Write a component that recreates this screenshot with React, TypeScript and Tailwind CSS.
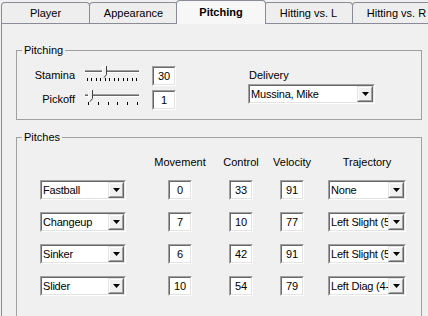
import type { ReactNode } from 'react'

const tabs = ['Player', 'Appearance', 'Pitching', 'Hitting vs. L', 'Hitting vs. R']

const pitches = [
  { name: 'Fastball', movement: 0, control: 33, velocity: 91, trajectory: 'None' },
  { name: 'Changeup', movement: 7, control: 10, velocity: 77, trajectory: 'Left Slight (5-6)' },
  { name: 'Sinker', movement: 6, control: 42, velocity: 91, trajectory: 'Left Slight (5-6)' },
  { name: 'Slider', movement: 10, control: 54, velocity: 79, trajectory: 'Left Diag (4-5)' },
]

function Sunken({ className, children }: { className: string; children: ReactNode }) {
  return (
    <div className={`border border-t-[#a0a0a0] border-l-[#a0a0a0] border-r-white border-b-white ${className}`}>
      <div className="flex h-full border border-t-[#696969] border-l-[#696969] border-r-[#e3e3e3] border-b-[#e3e3e3] bg-white">
        {children}
      </div>
    </div>
  )
}

function NumBox({ value }: { value: number }) {
  return (
    <Sunken className="h-[20px] w-[24px]">
      <span className="flex-1 text-center leading-[16px]">{value}</span>
    </Sunken>
  )
}

function DropButton() {
  return (
    <div className="h-full w-[16px] shrink-0 border border-t-[#e3e3e3] border-l-[#e3e3e3] border-r-[#696969] border-b-[#696969]">
      <div className="flex h-full items-center justify-center border border-t-white border-l-white border-r-[#a0a0a0] border-b-[#a0a0a0] bg-[#f0f0f0]">
        <svg width="7" height="4" viewBox="0 0 7 4">
          <path d="M0 0h7L3.5 4z" fill="#000" />
        </svg>
      </div>
    </div>
  )
}

function Combo({ value, className }: { value: string; className: string }) {
  return (
    <Sunken className={`h-[20px] ${className}`}>
      <span className="min-w-0 flex-1 overflow-hidden whitespace-nowrap pl-px tracking-[-0.2px] leading-[16px]">{value}</span>
      <DropButton />
    </Sunken>
  )
}

// trackbar drawn as a tiny picture: groove, ticks and the pointed thumb
function Slider({ thumb, ticks }: { thumb: number; ticks: number[] }) {
  return (
    <svg width="57" height="20" viewBox="0 0 57 20" className="shrink-0">
      <rect x="1" y="4" width="54" height="1" fill="#a0a0a0" />
      <rect x="1" y="5" width="54" height="1" fill="#696969" />
      <rect x="1" y="6" width="54" height="1" fill="#ffffff" />
      {ticks.map((t) => (
        <rect key={t} x={Math.round(t)} y="12" width="1" height="3" fill="#000" />
      ))}
      <path d={`M${thumb - 2} 0h4v8l-2 3l-2 -3z`} fill="#f0f0f0" />
      <path d={`M${thumb - 1.5} 8.5V0.5h3.5`} fill="none" stroke="#fff" strokeWidth="1" />
      <path d={`M${thumb + 2.5} 0v8.5l-2.5 3.2`} fill="none" stroke="#404040" strokeWidth="1" />
    </svg>
  )
}

const staminaTicks = Array.from({ length: 12 }, (_, i) => 3 + i * 4.45)
const pickoffTicks = Array.from({ length: 6 }, (_, i) => 4 + i * 9.8)

export default function App() {
  return (
    <div className="h-[316px] w-[428px] overflow-hidden bg-[#f0f0f0] font-['Liberation_Sans',Arial,sans-serif] text-[11px] text-black">
      <div className="flex h-[23px] items-end pl-px">
        {tabs.map((t) =>
          t === 'Pitching' ? (
            <div
              key={t}
              className="relative z-10 -mb-px -ml-[2px] -mr-px flex h-[24px] w-[90px] shrink-0 justify-center rounded-t-[4px] border border-b-0 border-[#898c95] bg-[#f7f7f7] pt-[4px] font-bold leading-[14px]"
            >
              {t}
            </div>
          ) : (
            <div
              key={t}
              className="-ml-px flex h-[21px] w-[89px] shrink-0 justify-center rounded-t-[4px] border border-b-0 border-[#898c95] bg-[#eeeeee] pt-[3px] leading-[14px] first:ml-0"
            >
              {t}
            </div>
          )
        )}
      </div>

      <div className="ml-px h-[300px] w-[440px] border border-[#898c95] bg-[#f0f0f0] px-[14px] pt-[19px]">
        <fieldset className="h-[77px] w-[406px] border border-[#a0a0a0]">
          <legend className="ml-[5px] px-[2px] leading-[14px]">Pitching</legend>
          <div className="flex pt-[9px]">
            <div className="flex flex-col gap-[4px]">
              <div className="flex h-[20px] items-start">
                <span className="w-[58px] text-right leading-[18px]">Stamina</span>
                <div className="ml-[9px]">
                  <Slider thumb={20} ticks={staminaTicks} />
                </div>
                <div className="ml-[11px]">
                  <NumBox value={30} />
                </div>
              </div>
              <div className="flex h-[20px] items-start">
                <span className="w-[58px] text-right leading-[18px]">Pickoff</span>
                <div className="ml-[9px]">
                  <Slider thumb={6} ticks={pickoffTicks} />
                </div>
                <div className="ml-[11px]">
                  <NumBox value={1} />
                </div>
              </div>
            </div>
            <div className="ml-[72px] flex flex-col pt-[2px]">
              <span className="pl-px leading-[14px]">Delivery</span>
              <Combo value="Mussina, Mike" className="mt-[2px] w-[127px]" />
            </div>
          </div>
        </fieldset>

        <fieldset className="mt-[10px] h-[200px] w-[406px] border border-[#a0a0a0]">
          <legend className="ml-[5px] px-[2px] leading-[14px]">Pitches</legend>
          <div className="flex flex-col pl-[23px] pt-[11px]">
            <div className="flex h-[14px] leading-[14px]">
              <span className="w-[86px]" />
              <span className="ml-[30px] flex w-[48px] justify-center whitespace-nowrap">Movement</span>
              <span className="ml-[13px] flex w-[48px] justify-center whitespace-nowrap">Control</span>
              <span className="ml-[3px] flex w-[48px] justify-center whitespace-nowrap">Velocity</span>
              <span className="ml-[12px] flex w-[78px] justify-center whitespace-nowrap">Trajectory</span>
            </div>
            <div className="mt-[11px] flex flex-col gap-[12px]">
              {pitches.map((p) => (
                <div key={p.name} className="flex h-[20px]">
                  <Combo value={p.name} className="w-[86px]" />
                  <div className="ml-[30px] flex w-[48px] justify-center">
                    <NumBox value={p.movement} />
                  </div>
                  <div className="ml-[13px] flex w-[48px] justify-center">
                    <NumBox value={p.control} />
                  </div>
                  <div className="ml-[3px] flex w-[48px] justify-center">
                    <NumBox value={p.velocity} />
                  </div>
                  <Combo value={p.trajectory} className="ml-[12px] w-[78px]" />
                </div>
              ))}
            </div>
          </div>
        </fieldset>
      </div>
    </div>
  )
}
